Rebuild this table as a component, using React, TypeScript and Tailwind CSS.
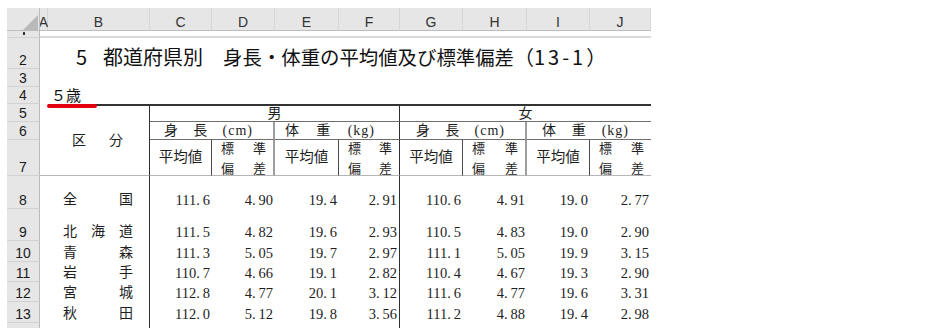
import React from "react";

const COLS = ["A", "B", "C", "D", "E", "F", "G", "H", "I", "J"];

const rows = [
  { no: 8, name: ["全", "国"], vals: ["111.6", "4.90", "19.4", "2.91", "110.6", "4.91", "19.0", "2.77"] },
  { no: 9, name: ["北", "海", "道"], vals: ["111.5", "4.82", "19.6", "2.93", "110.5", "4.83", "19.0", "2.90"] },
  { no: 10, name: ["青", "森"], vals: ["111.3", "5.05", "19.7", "2.97", "111.1", "5.05", "19.9", "3.15"] },
  { no: 11, name: ["岩", "手"], vals: ["110.7", "4.66", "19.1", "2.82", "110.4", "4.67", "19.3", "2.90"] },
  { no: 12, name: ["宮", "城"], vals: ["112.8", "4.77", "20.1", "3.12", "111.6", "4.77", "19.6", "3.31"] },
  { no: 13, name: ["秋", "田"], vals: ["112.0", "5.12", "19.8", "3.56", "111.2", "4.88", "19.4", "2.98"] },
];

const RowHead = ({ n }: { n?: number }) => (
  <div className="flex items-end justify-center bg-[#e6e6e6] border-r border-b border-r-[#bcbcbc] border-b-[#d2d2d2] text-[14px] leading-[16px] text-[#1a1a1a] font-['Liberation_Sans',Arial,sans-serif]">
    {n}
  </div>
);

// Mincho-style numbers: the period takes a full half-width cell
const Num = ({ v }: { v: string }) => {
  const [i, d] = v.split(".");
  return (
    <span>
      {i}
      <span className="inline-block w-[6.5px]">.</span>
      {d}
    </span>
  );
};

const StdDev = ({ border }: { border: string }) => (
  <div className={`flex flex-col justify-center pt-[2px] pl-[9px] pr-[7px] text-[13px] leading-[20px] border-b border-b-[#b5b5b5] ${border}`}>
    <div className="flex justify-between">
      <span>標</span>
      <span>準</span>
    </div>
    <div className="flex justify-between">
      <span>偏</span>
      <span>差</span>
    </div>
  </div>
);

const Mean = ({ border }: { border: string }) => (
  <div className={`flex items-center justify-center text-[14.5px] border-b border-b-[#b5b5b5] ${border}`}>平均値</div>
);

export default function App() {
  return (
    <div className="w-[925px] h-[336px] overflow-hidden bg-white pt-[8px] pl-[7px]">
      <div className="grid w-[644px] grid-cols-[33px_8px_102px_62px_63px_64px_61px_63px_64px_63px_61px] grid-rows-[23px_7px_31px_18px_17px_18px_18px_36px_33px_32px_21px_20px_20px_21px_5px] font-['Liberation_Serif','Noto_Sans_CJK_JP',serif] text-[#1e1e1e]">
        {/* column letters */}
        <div className="relative bg-[#e6e6e6] border-r border-b border-r-[#bcbcbc] border-b-[#bdbdbd]">
          <svg className="absolute left-0 top-0" width="33" height="22">
            <polygon points="16,22 31,7 31,22" fill="#b9b9b9" />
          </svg>
        </div>
        {COLS.map((c) => (
          <div
            key={c}
            className="flex items-end justify-center bg-[#e6e6e6] border-r border-b border-r-[#d6d6d6] border-b-[#bdbdbd] text-[14px] leading-[16px] text-[#333] font-['Liberation_Sans',Arial,sans-serif]"
          >
            {c}
          </div>
        ))}

        {/* row 1 (almost hidden, only a sliver of its number shows) */}
        <div className="flex justify-center pt-[1px] pl-[1px] bg-[#e6e6e6] border-r border-b border-r-[#bcbcbc] border-b-[#d2d2d2]">
          <div className="h-[3px] w-[2px] bg-[#333]" />
        </div>
        <div className="col-span-10 border-b-2 border-[#d9d9d9]" />

        {/* row 2: title */}
        <RowHead n={2} />
        <div className="col-span-10 flex items-end whitespace-nowrap pl-[36px] font-['Noto_Sans_CJK_JP',sans-serif] text-[20px] leading-[24px] text-[#111]">
          <span>5</span>
          <span className="ml-[16px]">都道府県別</span>
          <span className="ml-[20px] text-[19.4px]">身長・体重の平均値及び標準偏差</span>
          <span>
            （<span className="tracking-[3px]">13-1</span>）
          </span>
        </div>

        {/* row 3 */}
        <RowHead n={3} />
        <div className="col-span-10" />

        {/* row 4 */}
        <RowHead n={4} />
        <div />
        <div className="relative flex items-end pl-[3px] font-['Noto_Sans_CJK_JP',sans-serif] text-[15px] leading-[18px] text-[#111]">
          ５歳
          <span className="absolute left-[-1px] bottom-[-4px] z-10 h-[4px] w-[50px] rounded-full bg-[#e3000f]" />
        </div>
        <div className="col-span-8" />

        {/* row 5 */}
        <RowHead n={5} />
        <div className="row-span-3 border-b border-[#b5b5b5]" />
        <div className="row-span-3 flex items-center justify-between pl-[24px] pr-[26px] text-[14px] border-t-2 border-r border-b border-t-[#333] border-r-[#2e2e2e] border-b-[#b5b5b5]">
          <span>区</span>
          <span>分</span>
        </div>
        <div className="col-span-4 flex items-center justify-center text-[14px] border-t-2 border-r border-b border-t-[#333] border-r-[#2e2e2e] border-b-[#6e6e6e]">男</div>
        <div className="col-span-4 flex items-center justify-center text-[14px] border-t-2 border-b border-t-[#333] border-b-[#6e6e6e]">女</div>

        {/* row 6 */}
        <RowHead n={6} />
        <div className="col-span-2 flex items-center justify-between pl-[14px] pr-[20px] text-[14px] border-b border-r-2 border-b-[#6e6e6e] border-r-[#9e9e9e]">
          <span>身</span>
          <span>長</span>
          <span className="tracking-[1px]">(cm)</span>
        </div>
        <div className="col-span-2 flex items-center justify-between pl-[10px] pr-[24px] text-[14px] border-b border-r border-b-[#6e6e6e] border-r-[#2e2e2e]">
          <span>体</span>
          <span>重</span>
          <span className="tracking-[1px]">(kg)</span>
        </div>
        <div className="col-span-2 flex items-center justify-between pl-[16px] pr-[20px] text-[14px] border-b border-r-2 border-b-[#6e6e6e] border-r-[#9e9e9e]">
          <span>身</span>
          <span>長</span>
          <span className="tracking-[1px]">(cm)</span>
        </div>
        <div className="col-span-2 flex items-center justify-between pl-[15px] pr-[22px] text-[14px] border-b border-b-[#6e6e6e]">
          <span>体</span>
          <span>重</span>
          <span className="tracking-[1px]">(kg)</span>
        </div>

        {/* row 7 */}
        <RowHead n={7} />
        <Mean border="border-r border-r-[#4a4a4a]" />
        <StdDev border="border-r-2 border-r-[#9e9e9e]" />
        <Mean border="border-r border-r-[#4a4a4a]" />
        <StdDev border="border-r border-r-[#2e2e2e]" />
        <Mean border="border-r border-r-[#4a4a4a]" />
        <StdDev border="border-r-2 border-r-[#9e9e9e]" />
        <Mean border="border-r border-r-[#4a4a4a]" />
        <StdDev border="" />

        {/* data rows */}
        {rows.map((r) => (
          <React.Fragment key={r.no}>
            <RowHead n={r.no} />
            <div />
            <div className="flex items-end justify-between pl-[15px] pr-[16px] text-[14px] leading-[18px] border-r border-[#2e2e2e]">
              {r.name.map((ch, i) => (
                <span key={i}>{ch}</span>
              ))}
            </div>
            {r.vals.map((v, i) => (
              <div
                key={i}
                className={`flex items-end justify-end pr-[2px] text-[14.5px] leading-[18px] ${i === 3 ? "border-r border-[#2e2e2e]" : ""}`}
              >
                <Num v={v} />
              </div>
            ))}
          </React.Fragment>
        ))}

        {/* row 14, cut off */}
        <div className="bg-[#e6e6e6] border-r border-[#bcbcbc]" />
        <div />
        <div className="border-r border-[#2e2e2e]" />
        <div className="col-span-4 border-r border-[#2e2e2e]" />
        <div className="col-span-4" />
      </div>
    </div>
  );
}
